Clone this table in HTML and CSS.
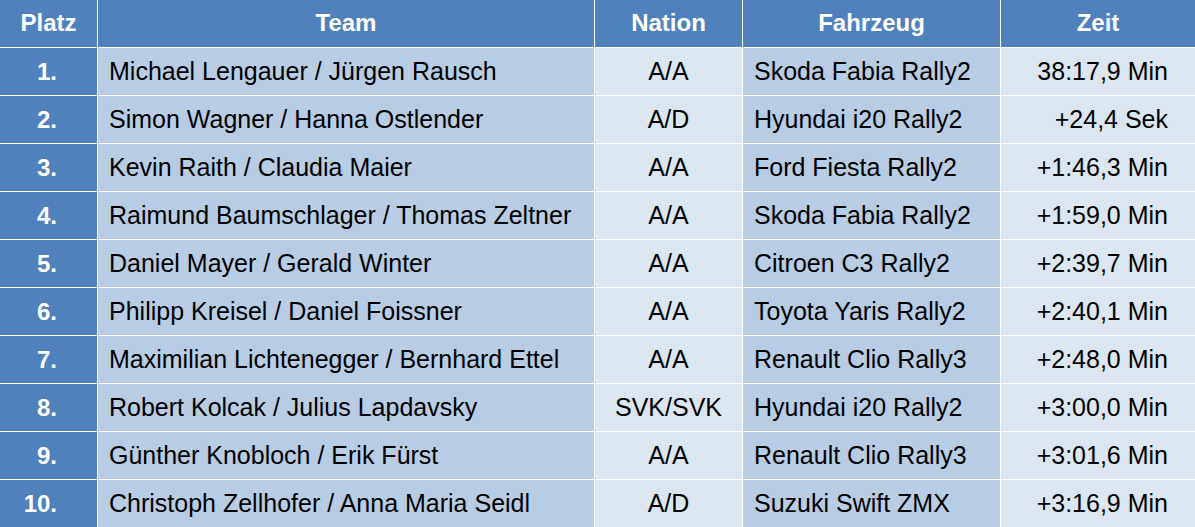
FILE: index.html
```html
<!DOCTYPE html>
<html lang="de">
<head>
<meta charset="utf-8">
<title>Ergebnis</title>
<link rel="stylesheet" href="styles.css">
</head>
<body>
<div class="results">
  <div class="row head">
    <div class="c platz">Platz</div>
    <div class="c team">Team</div>
    <div class="c nation">Nation</div>
    <div class="c car">Fahrzeug</div>
    <div class="c zeit">Zeit</div>
  </div>
  <div class="row"><div class="c platz">1.</div><div class="c team">Michael Lengauer / Jürgen Rausch</div><div class="c nation">A/A</div><div class="c car">Skoda Fabia Rally2</div><div class="c zeit">38:17,9 Min</div></div>
  <div class="row"><div class="c platz">2.</div><div class="c team">Simon Wagner / Hanna Ostlender</div><div class="c nation">A/D</div><div class="c car">Hyundai i20 Rally2</div><div class="c zeit">+24,4 Sek</div></div>
  <div class="row"><div class="c platz">3.</div><div class="c team">Kevin Raith / Claudia Maier</div><div class="c nation">A/A</div><div class="c car">Ford Fiesta Rally2</div><div class="c zeit">+1:46,3 Min</div></div>
  <div class="row"><div class="c platz">4.</div><div class="c team">Raimund Baumschlager / Thomas Zeltner</div><div class="c nation">A/A</div><div class="c car">Skoda Fabia Rally2</div><div class="c zeit">+1:59,0 Min</div></div>
  <div class="row"><div class="c platz">5.</div><div class="c team">Daniel Mayer / Gerald Winter</div><div class="c nation">A/A</div><div class="c car">Citroen C3 Rally2</div><div class="c zeit">+2:39,7 Min</div></div>
  <div class="row"><div class="c platz">6.</div><div class="c team">Philipp Kreisel / Daniel Foissner</div><div class="c nation">A/A</div><div class="c car">Toyota Yaris Rally2</div><div class="c zeit">+2:40,1 Min</div></div>
  <div class="row"><div class="c platz">7.</div><div class="c team">Maximilian Lichtenegger / Bernhard Ettel</div><div class="c nation">A/A</div><div class="c car">Renault Clio Rally3</div><div class="c zeit">+2:48,0 Min</div></div>
  <div class="row"><div class="c platz">8.</div><div class="c team">Robert Kolcak / Julius Lapdavsky</div><div class="c nation">SVK/SVK</div><div class="c car">Hyundai i20 Rally2</div><div class="c zeit">+3:00,0 Min</div></div>
  <div class="row"><div class="c platz">9.</div><div class="c team">Günther Knobloch / Erik Fürst</div><div class="c nation">A/A</div><div class="c car">Renault Clio Rally3</div><div class="c zeit">+3:01,6 Min</div></div>
  <div class="row"><div class="c platz">10.</div><div class="c team">Christoph Zellhofer / Anna Maria Seidl</div><div class="c nation">A/D</div><div class="c car">Suzuki Swift ZMX</div><div class="c zeit">+3:16,9 Min</div></div>
</div>
</body>
</html>
```
FILE: styles.css
```css
html, body {
  margin: 0;
  padding: 0;
  background: #ffffff;
}
.results {
  display: grid;
  grid-template-columns: 97px 496px 147px 257px 194px;
  grid-auto-rows: 47px;
  gap: 1px;
  width: 1195px;
  background: #ffffff;
  font-family: "Liberation Sans", Arial, sans-serif;
  font-size: 25px;
  color: #000000;
}
.row {
  display: contents;
}
.c {
  display: flex;
  align-items: center;
  white-space: nowrap;
  overflow: hidden;
}
.platz {
  background: #4f81bd;
  color: #ffffff;
  font-weight: bold;
  font-size: 24px;
  justify-content: flex-end;
  padding-right: 40px;
}
.team, .car {
  background: #b8cce4;
  padding-left: 11px;
}
.nation, .zeit {
  background: #dce6f1;
}
.nation {
  justify-content: center;
}
.zeit {
  justify-content: flex-end;
  padding-right: 27px;
}
.head .c {
  background: #4f81bd;
  color: #ffffff;
  font-weight: bold;
  font-size: 24px;
  justify-content: center;
  padding: 0 0 2px;
}
```
